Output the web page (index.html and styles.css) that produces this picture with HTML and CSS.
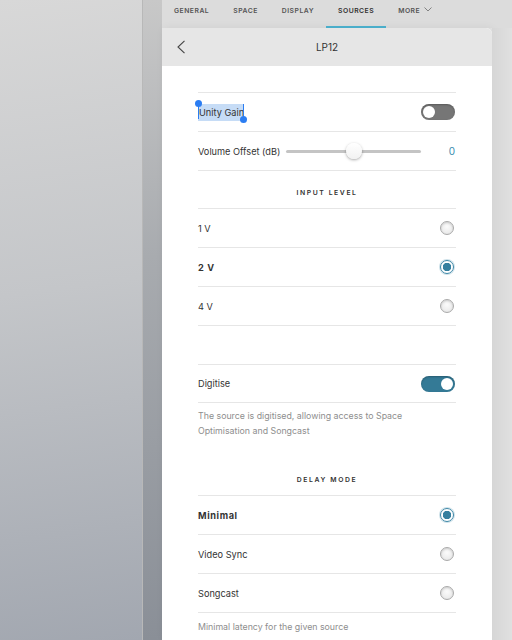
FILE: index.html
```html
<!DOCTYPE html>
<html>
    <head>
        <link rel="stylesheet" href="styles.css">
    </head>
    <body>
        <div class="side"></div>
        <div class="strip"></div>
        <div class="main">
            <div class="tabs">
                <span class="tab">GENERAL</span>
                <span class="tab">SPACE</span>
                <span class="tab">DISPLAY</span>
                <span class="tab active">SOURCES</span>
                <span class="tab">MORE
                    <svg width="8" height="5" viewBox="0 0 8 5"><path d="M0.5 0.5 L4 4 L7.5 0.5" fill="none" stroke="#777" stroke-width="0.9"/></svg>
                </span>
            </div>
            <div class="stage">
                <div class="card">
                    <div class="card-head">
                        <svg class="back" width="10" height="14" viewBox="0 0 10 14"><path d="M8.5 0.8 L2 7 L8.5 13.2" fill="none" stroke="#444" stroke-width="1.1"/></svg>
                        <span class="title">LP12</span>
                    </div>
                    <div class="card-body">
                        <div class="group">
                            <div class="row">
                                <span class="label"><span class="sel">Unity Gain<i class="h h1"></i><i class="h h2"></i></span></span>
                                <span class="toggle"></span>
                            </div>
                            <div class="row">
                                <span class="label fixed">Volume Offset (dB)</span>
                                <span class="slider"><span class="knob"></span></span>
                                <span class="value">0</span>
                            </div>
                        </div>

                        <div class="section">INPUT LEVEL</div>
                        <div class="group">
                            <div class="row">
                                <span class="label">1 V</span>
                                <span class="radio"></span>
                            </div>
                            <div class="row">
                                <span class="label bold">2 V</span>
                                <span class="radio on"></span>
                            </div>
                            <div class="row">
                                <span class="label">4 V</span>
                                <span class="radio"></span>
                            </div>
                        </div>

                        <div class="spacer"></div>
                        <div class="group">
                            <div class="row short">
                                <span class="label">Digitise</span>
                                <span class="toggle on"></span>
                            </div>
                        </div>
                        <p class="note">The source is digitised, allowing access to Space Optimisation and Songcast</p>

                        <div class="section">DELAY MODE</div>
                        <div class="group">
                            <div class="row">
                                <span class="label bold">Minimal</span>
                                <span class="radio on"></span>
                            </div>
                            <div class="row">
                                <span class="label">Video Sync</span>
                                <span class="radio"></span>
                            </div>
                            <div class="row">
                                <span class="label">Songcast</span>
                                <span class="radio"></span>
                            </div>
                        </div>
                        <p class="note last">Minimal latency for the given source</p>
                    </div>
                </div>
                <div class="gutter"></div>
            </div>
        </div>
    </body>
</html>
```

FILE: styles.css
```css
body, html {
    margin: 0;
    padding: 0;
    height: 100%;
    overflow: hidden;
    font-family: 'Inter', 'Roboto', sans-serif;
    color: #333;
}

body {
    display: flex;
}

.side {
    width: 142px;
    flex-shrink: 0;
    background: linear-gradient(172deg, #d8d8d8 0%, #c4c6c9 45%, #a2a7b0 100%);
}

.strip {
    width: 20px;
    flex-shrink: 0;
    border-left: 1px solid #b8b8b8;
    box-sizing: border-box;
    background: linear-gradient(180deg, #c8c8c8 0%, #a8abaf 40%, #8a8f97 100%);
}

.main {
    flex: 1;
    display: flex;
    flex-direction: column;
    min-height: 0;
    background: linear-gradient(90deg, #dcdcdc 0%, #e4e4e4 100%);
}

.tabs {
    height: 28px;
    flex-shrink: 0;
    display: flex;
    align-items: flex-start;
    background: #dcdcdc;
}

.tab {
    height: 28px;
    box-sizing: border-box;
    padding: 6px 12px 0;
    font-size: 6.8px;
    font-weight: 600;
    letter-spacing: 0.5px;
    color: #555;
    display: flex;
    gap: 4px;
    align-items: flex-start;
}

.tab svg {
    margin-top: 1px;
}

.tab.active {
    color: #333;
    border-bottom: 2px solid #4cb2cf;
}

.stage {
    flex: 1;
    display: flex;
    min-height: 0;
}

.card {
    width: 330px;
    display: flex;
    flex-direction: column;
    background: #fff;
    box-shadow: 2px 0 10px rgba(0,0,0,0.06);
    border-top-right-radius: 6px;
}

.card-head {
    height: 38px;
    flex-shrink: 0;
    display: flex;
    align-items: center;
    justify-content: center;
    position: relative;
    background: #e6e6e6;
    border-top-right-radius: 6px;
}

.back {
    position: absolute;
    left: 14px;
    top: 12px;
}

.title {
    font-size: 10px;
    color: #333;
}

.card-body {
    padding: 26px 36px 0;
}

.group {
    border-top: 1px solid #e6e6e6;
}

.row {
    height: 39px;
    box-sizing: border-box;
    display: flex;
    align-items: center;
    border-bottom: 1px solid #e6e6e6;
    font-size: 9.2px;
    color: #333;
}

.row.short {
    height: 38px;
}

.label {
    flex: 1;
}

.label.fixed {
    flex: none;
    width: 88px;
}

.label.bold {
    font-weight: 700;
    letter-spacing: 0.6px;
}

.sel {
    position: relative;
    background: #c6dcf6;
    padding: 3px 0 3px 1px;
}

.h {
    position: absolute;
    width: 1px;
    background: #2b7df2;
}

.h::after {
    content: '';
    position: absolute;
    left: -3px;
    width: 7px;
    height: 7px;
    border-radius: 50%;
    background: #2b7df2;
}

.h1 {
    left: 0;
    top: -1px;
    height: 16px;
}

.h1::after {
    top: -3px;
}

.h2 {
    right: 0;
    top: 0;
    height: 16px;
}

.h2::after {
    bottom: -3px;
}

.toggle {
    width: 34px;
    height: 16px;
    border-radius: 8px;
    background: #767676;
    position: relative;
    margin-right: 1px;
    box-shadow: inset 0 1px 2px rgba(0,0,0,0.25);
}

.toggle::after {
    content: '';
    position: absolute;
    left: 2px;
    top: 2px;
    width: 12px;
    height: 12px;
    border-radius: 50%;
    background: #fff;
}

.toggle.on {
    background: #347a96;
}

.toggle.on::after {
    left: 20px;
}

.slider {
    flex: 1;
    height: 3px;
    border-radius: 2px;
    background: #c4c4c4;
    position: relative;
    margin-right: 27px;
}

.knob {
    position: absolute;
    left: 60px;
    top: -7px;
    width: 16px;
    height: 16px;
    border-radius: 50%;
    background: linear-gradient(#fff, #f2f2f2);
    box-shadow: 0 1px 3px rgba(0,0,0,0.35);
}

.value {
    width: 7px;
    text-align: right;
    color: #3a8db0;
    font-size: 10px;
    margin-right: 1px;
}

.radio {
    width: 12px;
    height: 12px;
    border-radius: 50%;
    border: 1px solid #aaa;
    background: radial-gradient(circle at 50% 40%, #fbfbfb, #e4e4e4);
    box-shadow: inset 0 1px 2px rgba(0,0,0,0.15);
    margin-right: 2px;
}

.radio.on {
    border-color: #3c86a6;
    background: radial-gradient(circle, #357f9f 0 4px, #fff 4.5px);
    box-shadow: 0 0 0 1px rgba(60,134,166,0.25);
}

.section {
    height: 37px;
    box-sizing: border-box;
    display: flex;
    align-items: flex-end;
    justify-content: center;
    padding-bottom: 11px;
    font-size: 6.8px;
    font-weight: 600;
    letter-spacing: 1.6px;
    color: #333;
}

.spacer {
    height: 38px;
}

.note {
    margin: 0;
    padding: 5px 0 0;
    height: 55px;
    box-sizing: border-box;
    font-size: 8.8px;
    line-height: 15px;
    color: #8e8e8e;
}

.note.last {
    padding-top: 6px;
}

.gutter {
    flex: 1;
    background: linear-gradient(90deg, #d6d6d6, #e0e0e0);
}
```
